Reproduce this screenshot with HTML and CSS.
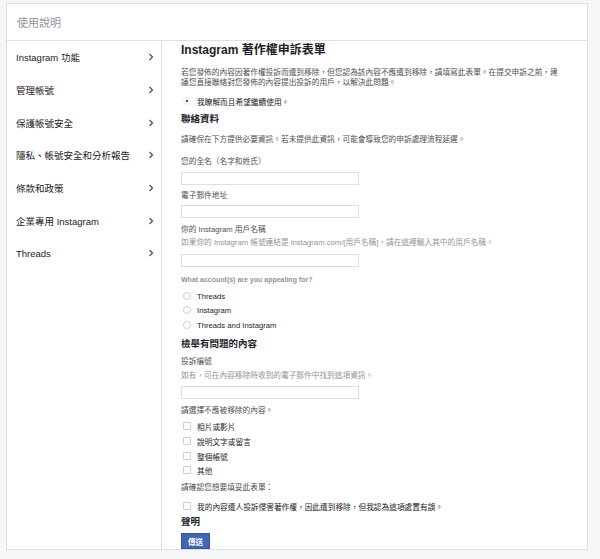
FILE: index.html
```html
<!DOCTYPE html>
<html lang="zh-Hant">
<head>
    <meta charset="UTF-8">
    <meta name="viewport" content="width=device-width, initial-scale=1.0">
    <title>使用說明</title>
    <link rel="stylesheet" href="styles.css">
</head>
<body>
    <div class="help-card">
        <div class="help-header">使用說明</div>

        <div class="help-body">
            <ul class="side-nav">
                <li><span>Instagram 功能</span><svg class="chev" viewBox="0 0 6 8"><path d="M1.5 1 L4.5 4 L1.5 7"/></svg></li>
                <li><span>管理帳號</span><svg class="chev" viewBox="0 0 6 8"><path d="M1.5 1 L4.5 4 L1.5 7"/></svg></li>
                <li><span>保護帳號安全</span><svg class="chev" viewBox="0 0 6 8"><path d="M1.5 1 L4.5 4 L1.5 7"/></svg></li>
                <li><span>隱私、帳號安全和分析報告</span><svg class="chev" viewBox="0 0 6 8"><path d="M1.5 1 L4.5 4 L1.5 7"/></svg></li>
                <li><span>條款和政策</span><svg class="chev" viewBox="0 0 6 8"><path d="M1.5 1 L4.5 4 L1.5 7"/></svg></li>
                <li><span>企業專用 Instagram</span><svg class="chev" viewBox="0 0 6 8"><path d="M1.5 1 L4.5 4 L1.5 7"/></svg></li>
                <li><span>Threads</span><svg class="chev" viewBox="0 0 6 8"><path d="M1.5 1 L4.5 4 L1.5 7"/></svg></li>
            </ul>

            <form class="appeal-form">
                <h1 class="form-title">Instagram 著作權申訴表單</h1>
                <p class="intro">若您發佈的內容因著作權投訴而遭到移除，但您認為該內容不應遭到移除，請填寫此表單。在提交申訴之前，建議您直接聯絡對您發佈的內容提出投訴的用戶，以解決此問題。</p>
                <div class="choice first-choice"><span class="radio checked"></span>我瞭解而且希望繼續使用。</div>

                <h2 class="section-title s-contact">聯絡資料</h2>
                <p class="note n-contact">請確保在下方提供必要資訊。若未提供此資訊，可能會導致您的申訴處理流程延遲。</p>

                <label class="field-label l-name">您的全名（名字和姓氏）</label>
                <input class="text-field f-name" type="text">

                <label class="field-label l-email">電子郵件地址</label>
                <input class="text-field f-email" type="text">

                <label class="field-label l-user">你的 Instagram 用戶名稱</label>
                <p class="hint h-user">如果你的 Instagram 帳號連結是 instagram.com/[用戶名稱]，請在這裡輸入其中的用戶名稱。</p>
                <input class="text-field f-user" type="text">

                <p class="question">What account(s) are you appealing for?</p>
                <div class="choice c-threads"><span class="radio"></span>Threads</div>
                <div class="choice c-insta"><span class="radio"></span>Instagram</div>
                <div class="choice c-both"><span class="radio"></span>Threads and Instagram</div>

                <h2 class="section-title s-report">檢舉有問題的內容</h2>
                <label class="field-label l-number">投訴編號</label>
                <p class="hint h-number">如有，可在內容移除時收到的電子郵件中找到這項資訊。</p>
                <input class="text-field f-number" type="text">

                <label class="field-label l-pick">請選擇不應被移除的內容。</label>
                <div class="choice c-photo"><span class="box"></span>相片或影片</div>
                <div class="choice c-caption"><span class="box"></span>說明文字或留言</div>
                <div class="choice c-account"><span class="box"></span>整個帳號</div>
                <div class="choice c-other"><span class="box"></span>其他</div>

                <label class="field-label l-confirm">請確認您想要填妥此表單：</label>
                <div class="choice c-confirm"><span class="box"></span>我的內容遭人投訴侵害著作權，因此遭到移除，但我認為這項處置有誤。</div>

                <h2 class="section-title s-statement">聲明</h2>
                <button class="send-button" type="button">傳送</button>
            </form>
        </div>
    </div>
</body>
</html>
```

FILE: styles.css
```css
body {
    margin: 0;
    background: #f5f6f7;
    font-family: "Liberation Sans", "Noto Sans CJK TC", sans-serif;
    color: #1d2129;
}

.help-card {
    width: 582px;
    margin: 3px 0 0 6px;
    background: #fff;
    border: 1px solid #dddfe2;
    box-sizing: border-box;
}

.help-header {
    height: 36px;
    line-height: 39px;
    padding-left: 10px;
    font-size: 11px;
    color: #90949c;
    border-bottom: 1px solid #dddfe2;
}

.help-body {
    display: flex;
}

.side-nav {
    list-style: none;
    margin: 0;
    padding: 0;
    width: 154px;
    flex-shrink: 0;
    border-right: 1px solid #dddfe2;
}

.side-nav li {
    display: flex;
    align-items: center;
    justify-content: space-between;
    height: 32.7px;
    padding: 0 7px 0 9px;
    font-size: 9.5px;
    color: #1d2129;
}

.chev {
    width: 6px;
    height: 8px;
    fill: none;
    stroke: #4b4f56;
    stroke-width: 1.2;
}

.appeal-form {
    flex: 1;
    padding: 0 26px 0 19px;
    font-size: 7.7px;
    color: #4b4f56;
}

.form-title {
    margin: 0;
    padding-top: 1px;
    font-size: 12px;
    line-height: 16px;
    color: #1d2129;
}

.intro {
    margin: 10px 0 0;
    line-height: 10px;
}

.section-title {
    margin: 0;
    font-size: 9.5px;
    line-height: 14px;
    color: #1d2129;
}

.note,
.hint,
.question,
.field-label {
    display: block;
    margin: 0;
    line-height: 12px;
}

.hint {
    color: #90949c;
}

.question {
    color: #90949c;
    font-weight: bold;
    font-size: 7px;
}

.text-field {
    display: block;
    width: 178px;
    height: 13px;
    margin: 0;
    padding: 0;
    border: 1px solid #dddfe2;
    box-sizing: border-box;
    background: #fff;
}

.choice {
    display: flex;
    align-items: center;
    height: 12px;
    padding-left: 2px;
    color: #1d2129;
}

.radio,
.box {
    width: 6px;
    height: 6px;
    margin-right: 6px;
    border: 1px solid #ccd0d5;
    background: #fff;
    flex-shrink: 0;
}

.radio {
    border-radius: 50%;
}

.radio.checked {
    border-color: #e9ebee;
    background: radial-gradient(circle, #4b4f56 0 1.3px, #fff 1.6px);
}

.box {
    border-radius: 1px;
}

.first-choice { margin-top: 7px; }
.s-contact { margin-top: 5px; }
.n-contact { margin-top: 8px; }
.l-name { margin-top: 10px; }
.f-name { margin-top: 4px; }
.l-email { margin-top: 5px; }
.f-email { margin-top: 3px; }
.l-user { margin-top: 6px; }
.h-user { margin-top: 1px; }
.f-user { margin-top: 5px; }
.question { margin-top: 7px; }
.c-threads { margin-top: 4px; }
.c-insta { margin-top: 2px; }
.c-both { margin-top: 3px; }
.s-report { margin-top: 6px; }
.l-number { margin-top: 5px; }
.h-number { margin-top: 2px; }
.f-number { margin-top: 4px; }
.l-pick { margin-top: 6px; }
.c-photo { margin-top: 3px; }
.c-caption { margin-top: 3px; }
.c-account { margin-top: 3px; }
.c-other { margin-top: 2px; }
.l-confirm { margin-top: 6px; }
.c-confirm { margin-top: 6px; }
.s-statement { margin-top: 3px; }

.send-button {
    display: block;
    margin-top: 4px;
    width: 29px;
    height: 16px;
    padding: 0;
    border: 1px solid #365899;
    background: #4267b2;
    color: #fff;
    font-family: inherit;
    font-size: 7.5px;
    font-weight: bold;
}
```
